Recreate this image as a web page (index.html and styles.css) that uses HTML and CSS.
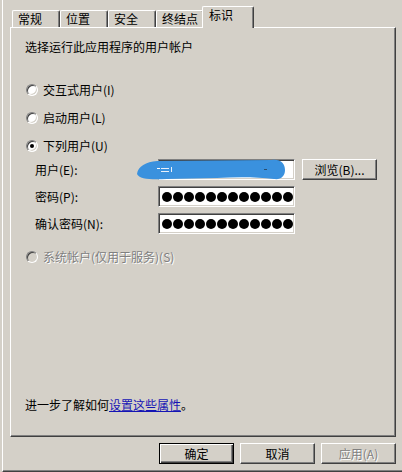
FILE: index.html
```html
<!DOCTYPE html>
<html lang="zh-CN">
<head>
<meta charset="utf-8">
<title>属性</title>
<link rel="stylesheet" href="styles.css">
</head>
<body>
<div class="dialog">
  <div class="tabs">
    <div class="tab">常规</div>
    <div class="tab">位置</div>
    <div class="tab">安全</div>
    <div class="tab">终结点</div>
    <div class="tab tab-active">标识</div>
  </div>
  <div class="panel">
    <div class="title">选择运行此应用程序的用户帐户</div>
    <div class="radio-row first"><span class="radio"></span><span>交互式用户(I)</span></div>
    <div class="radio-row"><span class="radio"></span><span>启动用户(L)</span></div>
    <div class="radio-row"><span class="radio checked"></span><span>下列用户(U)</span></div>
    <div class="field-row field-first">
      <span class="label">用户(E):</span>
      <div class="input-wrap">
        <div class="input"></div>
        <svg class="scribble" width="150" height="21" viewBox="0 0 150 21">
          <path d="M0 15 C1 7 9 3 20 2 L135 1 C144 0 148 5 148 11 C148 17 144 21 137 20 C120 18 100 18 80 19 L30 20 C14 21 2 20 0 15 Z" fill="#3a91de"/>
          <rect x="20" y="9" width="3" height="1" fill="#ffffff"/>
          <rect x="24" y="9" width="8" height="1" fill="#e8f0fa"/>
          <rect x="24" y="12" width="8" height="1" fill="#e8f0fa"/>
          <rect x="34" y="8" width="1" height="5" fill="#e8f0fa"/>
          <rect x="127" y="10" width="3" height="1" fill="#2a4e70"/>
        </svg>
      </div>
      <div class="btn browse">浏览(B)...</div>
    </div>
    <div class="field-row">
      <span class="label">密码(P):</span>
      <div class="input dots"><i></i><i></i><i></i><i></i><i></i><i></i><i></i><i></i><i></i><i></i><i></i><i></i></div>
    </div>
    <div class="field-row">
      <span class="label">确认密码(N):</span>
      <div class="input dots"><i></i><i></i><i></i><i></i><i></i><i></i><i></i><i></i><i></i><i></i><i></i><i></i></div>
    </div>
    <div class="radio-row system disabled"><span class="radio off"></span><span>系统帐户(仅用于服务)(S)</span></div>
    <div class="learn">进一步了解如何<a class="link" href="#">设置这些属性</a>。</div>
  </div>
  <div class="buttons">
    <div class="btn default">确定</div>
    <div class="btn">取消</div>
    <div class="btn disabled">应用(A)</div>
  </div>
</div>
</body>
</html>
```
FILE: styles.css
```css
html, body {
  margin: 0;
  padding: 0;
  background: #d4d0c8;
}
body {
  width: 402px;
  height: 472px;
  overflow: hidden;
  font-family: "Noto Sans CJK SC", "Noto Sans", sans-serif;
  font-size: 12px;
  line-height: 14px;
  color: #000;
}
.dialog {
  margin-left: 2px;
  width: 400px;
  height: 472px;
  box-sizing: border-box;
  border-left: 1px solid #ffffff;
  border-bottom: 1px solid #404040;
  box-shadow: inset 0 -1px #808080;
  padding-top: 6px;
  display: flex;
  flex-direction: column;
}
.tabs {
  display: flex;
  align-items: flex-end;
  height: 21px;
  margin-left: 9px;
}
.tab {
  width: 48px;
  height: 17px;
  box-sizing: border-box;
  border-top: 1px solid #ffffff;
  border-left: 1px solid #ffffff;
  border-right: 1px solid #404040;
  box-shadow: inset -1px 0 #808080;
  border-radius: 2px 2px 0 0;
  padding: 1px 0 0 5px;
  white-space: nowrap;
}
.tab-active {
  width: 52px;
  height: 22px;
  margin: 0 -2px -1px -2px;
  padding-left: 6px;
  position: relative;
  z-index: 1;
  background: #d4d0c8;
}
.panel {
  margin-left: 7px;
  width: 386px;
  height: 410px;
  box-sizing: border-box;
  border-top: 1px solid #ffffff;
  border-left: 1px solid #ffffff;
  border-right: 1px solid #404040;
  border-bottom: 1px solid #404040;
  box-shadow: inset -1px -1px #808080;
  padding: 0 0 24px 14px;
  display: flex;
  flex-direction: column;
}
.title {
  margin-top: 12px;
}
.radio-row {
  display: flex;
  align-items: center;
  height: 14px;
  margin-top: 14px;
}
.radio-row.first {
  margin-top: 29px;
}
.radio-row.system {
  margin-top: 16px;
}
.radio {
  width: 12px;
  height: 12px;
  box-sizing: border-box;
  margin: 0 5px 0 1px;
  border-radius: 50%;
  border: 1px solid;
  border-color: #808080 #ffffff #ffffff #808080;
  box-shadow: inset 1px 1px #404040, inset -1px -1px #d4d0c8;
  background: #ffffff;
  display: flex;
  align-items: center;
  justify-content: center;
}
.radio.checked::after {
  content: "";
  width: 4px;
  height: 4px;
  border-radius: 50%;
  background: #000;
}
.radio.off {
  background: #d4d0c8;
}
.disabled {
  color: #808080;
  text-shadow: 1px 1px 0 #ffffff;
}
.field-row {
  display: flex;
  align-items: center;
  height: 21px;
  margin-top: 6px;
  padding-left: 10px;
}
.field-row.field-first {
  margin-top: 6px;
}
.label {
  width: 123px;
  white-space: nowrap;
}
.input-wrap {
  position: relative;
  width: 137px;
  height: 21px;
}
.input {
  width: 137px;
  height: 21px;
  box-sizing: border-box;
  background: #ffffff;
  border: 1px solid;
  border-color: #808080 #ffffff #ffffff #808080;
  box-shadow: inset 1px 1px #404040, inset -1px -1px #d4d0c8;
}
.scribble {
  position: absolute;
  left: -21px;
  top: 0;
}
.dots {
  display: flex;
  align-items: center;
  gap: 1px;
  padding-left: 3px;
}
.dots i {
  width: 10px;
  height: 10px;
  border-radius: 50%;
  background: #000;
  flex: none;
}
.btn {
  width: 75px;
  height: 21px;
  box-sizing: border-box;
  border: 1px solid;
  border-color: #ffffff #404040 #404040 #ffffff;
  box-shadow: inset -1px -1px #808080;
  display: flex;
  align-items: center;
  justify-content: center;
  white-space: nowrap;
}
.browse {
  margin-left: 7px;
}
.btn.default {
  border: 1px solid #000;
  box-shadow: inset 1px 1px #ffffff, inset -1px -1px #404040, inset -2px -2px #808080;
}
.learn {
  margin-top: auto;
}
.link {
  color: #1414b4;
  text-decoration: underline;
}
.buttons {
  display: flex;
  justify-content: flex-end;
  gap: 6px;
  margin-top: 6px;
  padding-right: 6px;
}
```
